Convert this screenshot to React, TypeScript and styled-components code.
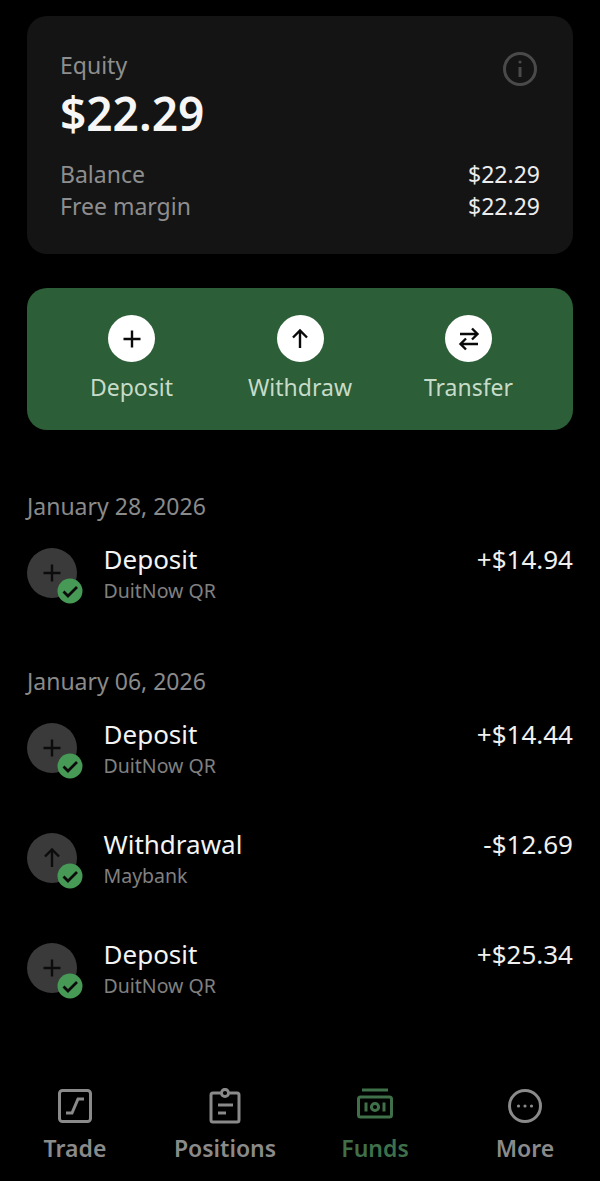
import styled, { createGlobalStyle } from "styled-components";

const GlobalStyle = createGlobalStyle`
  html, body {
    margin: 0;
    padding: 0;
    background: #000;
  }

  body {
    font-family: "Noto Sans", sans-serif;
  }
`;

const PlusIcon = () => (
  <svg width="24" height="24" viewBox="0 0 24 24" fill="none" stroke="currentColor" strokeWidth="2.4">
    <path d="M12 3.5v17M3.5 12h17" />
  </svg>
);

const UpIcon = () => (
  <svg width="24" height="24" viewBox="0 0 24 24" fill="none" stroke="currentColor" strokeWidth="2.4">
    <path d="M12 21V4M5 10.5L12 3.5l7 7" />
  </svg>
);

const SwapIcon = () => (
  <svg width="24" height="24" viewBox="0 0 24 24" fill="none" stroke="currentColor" strokeWidth="2.4">
    <path d="M3 7h17M15 1.5L20.5 7 15 12.5M21 17H4M9 11.5L3.5 17 9 22.5" />
  </svg>
);

const InfoIcon = () => (
  <svg width="34" height="34" viewBox="0 0 34 34" fill="none" stroke="#4a4a4a" strokeWidth="3">
    <circle cx="17" cy="17" r="15.5" />
    <path d="M17 15v10" />
    <circle cx="17" cy="10" r="1.6" fill="#4a4a4a" stroke="none" />
  </svg>
);

const CheckIcon = () => (
  <svg width="26" height="26" viewBox="0 0 26 26" fill="none">
    <circle cx="13" cy="13" r="12.5" fill="#479a56" />
    <path d="M6.5 13.5l4.5 4.5 9-9" stroke="#0b0b0b" strokeWidth="2.8" />
  </svg>
);

const TradeIcon = () => (
  <svg width="36" height="36" viewBox="0 0 36 36" fill="none" stroke="currentColor" strokeWidth="3">
    <rect x="2.5" y="2.5" width="31" height="31" rx="3" />
    <path d="M9 25h6l6-14h6" />
  </svg>
);

const PositionsIcon = () => (
  <svg width="36" height="36" viewBox="0 0 36 36" fill="none" stroke="currentColor" strokeWidth="3">
    <path d="M13 5H6a2 2 0 0 0-2 2v25a2 2 0 0 0 2 2h24a2 2 0 0 0 2-2V7a2 2 0 0 0-2-2h-7" />
    <circle cx="18" cy="5" r="3.6" />
    <path d="M11 17h15M11 25h8" />
  </svg>
);

const FundsIcon = () => (
  <svg width="36" height="36" viewBox="0 0 36 36" fill="none" stroke="currentColor" strokeWidth="3">
    <path d="M5 2h26" />
    <rect x="1.5" y="9" width="33" height="20" rx="2" />
    <path d="M9 14.5v9M27 14.5v9" />
    <circle cx="18" cy="19" r="3.6" />
  </svg>
);

const MoreIcon = () => (
  <svg width="36" height="36" viewBox="0 0 36 36" fill="none" stroke="currentColor" strokeWidth="3">
    <circle cx="18" cy="18" r="15.5" />
    <circle cx="11.5" cy="18" r="1.6" fill="currentColor" stroke="none" />
    <circle cx="18" cy="18" r="1.6" fill="currentColor" stroke="none" />
    <circle cx="24.5" cy="18" r="1.6" fill="currentColor" stroke="none" />
  </svg>
);

const groups = [
  {
    date: "January 28, 2026",
    items: [{ title: "Deposit", method: "DuitNow QR", amount: "+$14.94", up: false }],
  },
  {
    date: "January 06, 2026",
    items: [
      { title: "Deposit", method: "DuitNow QR", amount: "+$14.44", up: false },
      { title: "Withdrawal", method: "Maybank", amount: "-$12.69", up: true },
      { title: "Deposit", method: "DuitNow QR", amount: "+$25.34", up: false },
    ],
  },
];

const actions = [
  { label: "Deposit", icon: <PlusIcon /> },
  { label: "Withdraw", icon: <UpIcon /> },
  { label: "Transfer", icon: <SwapIcon /> },
];

const tabs = [
  { label: "Trade", icon: <TradeIcon />, active: false },
  { label: "Positions", icon: <PositionsIcon />, active: false },
  { label: "Funds", icon: <FundsIcon />, active: true },
  { label: "More", icon: <MoreIcon />, active: false },
];

const App = () => {
  return (
    <StyledPage>
      <GlobalStyle />
      <StyledContent>
        <StyledEquityCard>
          <StyledEquityTop>
            <div>
              <StyledEquityLabel>Equity</StyledEquityLabel>
              <StyledEquityValue>$22.29</StyledEquityValue>
            </div>
            <StyledInfoWrap>
              <InfoIcon />
            </StyledInfoWrap>
          </StyledEquityTop>
          <StyledStatRow>
            <StyledStatLabel>Balance</StyledStatLabel>
            <StyledStatValue>$22.29</StyledStatValue>
          </StyledStatRow>
          <StyledStatRow>
            <StyledStatLabel>Free margin</StyledStatLabel>
            <StyledStatValue>$22.29</StyledStatValue>
          </StyledStatRow>
        </StyledEquityCard>

        <StyledActions>
          {actions.map((action) => (
            <StyledAction key={action.label}>
              <StyledActionCircle>{action.icon}</StyledActionCircle>
              <StyledActionLabel>{action.label}</StyledActionLabel>
            </StyledAction>
          ))}
        </StyledActions>

        {groups.map((group) => (
          <StyledGroup key={group.date}>
            <StyledDate>{group.date}</StyledDate>
            {group.items.map((item) => (
              <StyledRow key={item.amount}>
                <StyledTxIcon>
                  {item.up ? <UpIcon /> : <PlusIcon />}
                  <StyledBadge>
                    <CheckIcon />
                  </StyledBadge>
                </StyledTxIcon>
                <StyledTxText>
                  <StyledTxTitle>{item.title}</StyledTxTitle>
                  <StyledTxMethod>{item.method}</StyledTxMethod>
                </StyledTxText>
                <StyledTxAmount>{item.amount}</StyledTxAmount>
              </StyledRow>
            ))}
          </StyledGroup>
        ))}
      </StyledContent>

      <StyledNav>
        {tabs.map((tab) => (
          <StyledTab key={tab.label} $active={tab.active}>
            {tab.icon}
            <StyledTabLabel>{tab.label}</StyledTabLabel>
          </StyledTab>
        ))}
      </StyledNav>
    </StyledPage>
  );
};

export default App;

const StyledPage = styled.div`
  display: flex;
  flex-direction: column;
  height: 1181px;
  overflow: hidden;
  background: #000;
`;

const StyledContent = styled.div`
  flex: 1;
  padding: 16px 27px 0;
`;

const StyledEquityCard = styled.div`
  box-sizing: border-box;
  height: 238px;
  padding: 32px 33px 0;
  border-radius: 20px;
  background: #141414;
`;

const StyledEquityTop = styled.div`
  display: flex;
  justify-content: space-between;
  align-items: flex-start;
  height: 110px;
  padding-right: 3px;
`;

const StyledInfoWrap = styled.div`
  margin-top: 4px;
`;

const StyledEquityLabel = styled.div`
  font-size: 23px;
  line-height: 34px;
  color: #8e8e8e;
`;

const StyledEquityValue = styled.div`
  font-size: 46px;
  line-height: 62px;
  font-weight: 600;
  color: #f6f6f6;
`;

const StyledStatRow = styled.div`
  display: flex;
  justify-content: space-between;
  height: 32px;
  line-height: 32px;
  font-size: 23px;
`;

const StyledStatLabel = styled.span`
  color: #8e8e8e;
`;

const StyledStatValue = styled.span`
  color: #ececec;
`;

const StyledActions = styled.div`
  display: flex;
  justify-content: center;
  box-sizing: border-box;
  height: 142px;
  margin-top: 34px;
  padding-top: 27px;
  border-radius: 20px;
  background: #2c5e37;
`;

const StyledAction = styled.div`
  display: flex;
  flex-direction: column;
  align-items: center;
  width: 168.5px;
`;

const StyledActionCircle = styled.div`
  display: flex;
  align-items: center;
  justify-content: center;
  width: 47px;
  height: 47px;
  border-radius: 50%;
  background: #fff;
  color: #0a0a0a;
`;

const StyledActionLabel = styled.div`
  margin-top: 8px;
  font-size: 23px;
  line-height: 34px;
  color: #c6dcc9;
`;

const StyledGroup = styled.div`
  margin-top: 59px;
`;

const StyledDate = styled.div`
  font-size: 23px;
  line-height: 34px;
  color: #8a8a8a;
`;

const StyledRow = styled.div`
  display: flex;
  align-items: flex-start;
  height: 110px;
  padding-top: 20px;
  box-sizing: border-box;

  &:last-child {
    height: 82px;
  }
`;

const StyledTxIcon = styled.div`
  position: relative;
  display: flex;
  align-items: center;
  justify-content: center;
  flex: none;
  width: 50px;
  height: 50px;
  margin-top: 5px;
  border-radius: 50%;
  background: #3a3a3a;
  color: #0c0c0c;
`;

const StyledBadge = styled.div`
  position: absolute;
  right: -6px;
  bottom: -6px;
  width: 26px;
  height: 26px;
`;

const StyledTxText = styled.div`
  flex: 1;
  margin: -1px 0 0 26.5px;
`;

const StyledTxTitle = styled.div`
  font-size: 26px;
  line-height: 34px;
  color: #f4f4f4;
`;

const StyledTxMethod = styled.div`
  font-size: 19.5px;
  line-height: 30px;
  color: #808080;
`;

const StyledTxAmount = styled.div`
  margin-top: -1px;
  font-size: 26px;
  line-height: 34px;
  color: #f0f0f0;
`;

const StyledNav = styled.nav`
  display: grid;
  grid-template-columns: repeat(4, 150px);
  height: 93px;
`;

const StyledTab = styled.div<{ $active: boolean }>`
  display: flex;
  flex-direction: column;
  align-items: center;
  color: ${({ $active }) => ($active ? "#3f7049" : "#8a8a8a")};
`;

const StyledTabLabel = styled.div`
  margin-top: 7px;
  font-size: 23px;
  line-height: 34px;
  font-weight: 600;
`;
